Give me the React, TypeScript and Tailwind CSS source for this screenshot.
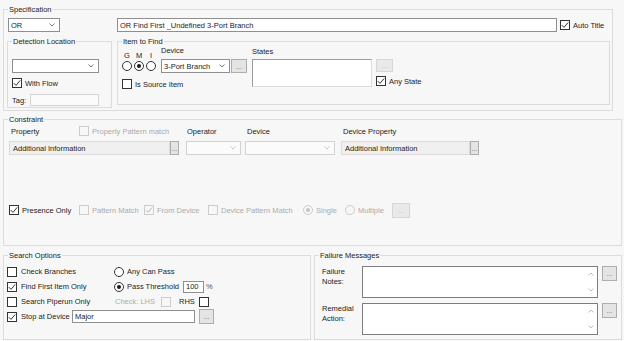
import type { ReactNode } from "react";

// WinForms style "find item" dialog

function Group({ title, className, children }: { title: string; className: string; children: ReactNode }) {
  return (
    <fieldset className={`shrink-0 border border-[#dcdcdc] ${className}`}>
      <legend className="ml-[4px] px-[1px] leading-[9px]">{title}</legend>
      {children}
    </fieldset>
  );
}

function Check({ checked, disabled, className = "" }: { checked?: boolean; disabled?: boolean; className?: string }) {
  return (
    <span
      className={`flex h-[10px] w-[10px] shrink-0 items-center justify-center border ${
        disabled ? "border-[#cccccc] bg-[#f7f7f7]" : "border-[#333333] bg-white"
      } ${className}`}
    >
      {checked && (
        <svg width="8" height="8" viewBox="0 0 8 8">
          <path d="M0.8 4.2 L3 6.4 L7.2 1.4" fill="none" stroke={disabled ? "#b8b8b8" : "#333"} strokeWidth="1" />
        </svg>
      )}
    </span>
  );
}

function Radio({ checked, disabled, className = "" }: { checked?: boolean; disabled?: boolean; className?: string }) {
  return (
    <span
      className={`flex h-[10px] w-[10px] shrink-0 items-center justify-center rounded-full border ${
        disabled ? "border-[#cccccc] bg-[#f7f7f7]" : "border-[#333333] bg-white"
      } ${className}`}
    >
      {checked && <span className={`h-[4px] w-[4px] rounded-full ${disabled ? "bg-[#c4c4c4]" : "bg-[#1a1a1a]"}`} />}
    </span>
  );
}

function Chevron({ up, color = "#666" }: { up?: boolean; color?: string }) {
  return (
    <svg width="6" height="4" viewBox="0 0 6 4" className="shrink-0">
      <path d={up ? "M0.5 3.5 L3 1 L5.5 3.5" : "M0.5 0.5 L3 3 L5.5 0.5"} fill="none" stroke={color} strokeWidth="0.9" />
    </svg>
  );
}

function Combo({ value = "", disabled, className }: { value?: string; disabled?: boolean; className: string }) {
  return (
    <div
      className={`flex shrink-0 items-center justify-between border pl-[2px] pr-[4px] ${
        disabled ? "border-[#d2d2d2] bg-[#fbfbfb]" : "border-[#8f8f8f] bg-white"
      } ${className}`}
    >
      <span className="whitespace-nowrap">{value}</span>
      <Chevron color={disabled ? "#c2c2c2" : "#6a6a6a"} />
    </div>
  );
}

function Dots({ disabled, className }: { disabled?: boolean; className: string }) {
  return (
    <div
      className={`flex shrink-0 items-center justify-center border text-[7px] leading-none ${
        disabled ? "border-[#d6d6d6] bg-[#e9e9e9] text-[#bdbdbd]" : "border-[#adadad] bg-[#e4e4e4] text-[#6a6a6a]"
      } ${className}`}
    >
      ...
    </div>
  );
}

function Memo({ className }: { className: string }) {
  return (
    <div className={`flex shrink-0 justify-end border border-[#7d7d7d] bg-white ${className}`}>
      <div className="flex w-[12px] flex-col items-center justify-between py-[5px]">
        <Chevron up color="#b5b5b5" />
        <Chevron color="#b5b5b5" />
      </div>
    </div>
  );
}

export default function App() {
  const dim = "text-[#ababab]";

  return (
    <div className="h-[341px] w-[624px] overflow-hidden bg-[#f7f7f7] pl-[3px] pt-[5px] font-['Liberation_Sans',Arial,sans-serif] text-[7.5px] leading-[9px] text-[#1c1c1c] antialiased">
      {/* Specification */}
      <Group title="Specification" className="h-[106px] w-[610px]">
        <div className="pl-[3px] pt-[4px]">
          <div className="flex h-[14px] items-center">
            <Combo value="OR" className="ml-[1px] h-[14px] w-[52px]" />
            <div className="ml-[57px] flex h-[14px] w-[440px] shrink-0 items-center border border-[#8f8f8f] bg-white pl-[2px]">
              OR Find First _Undefined 3-Port Branch
            </div>
            <Check checked className="ml-[3px]" />
            <span className="ml-[3px] whitespace-nowrap">Auto Title</span>
          </div>

          <div className="mt-[5px] flex">
            <Group title="Detection Location" className="h-[71px] w-[105px]">
              <div className="pl-[4px] pt-[13px]">
                <Combo className="h-[14px] w-[87px]" />
                <div className="mt-[5px] flex h-[10px] items-center">
                  <Check checked />
                  <span className="ml-[3px]">With Flow</span>
                </div>
                <div className="mt-[6px] flex h-[12px] items-center">
                  <span className="w-[18px]">Tag:</span>
                  <div className="h-[12px] w-[69px] border border-[#d4d4d4] bg-[#fbfbfb]" />
                </div>
              </div>
            </Group>

            <Group title="Item to Find" className="ml-[5px] h-[68px] w-[493px]">
              <div className="flex pl-[3px]">
                <div className="flex flex-col">
                  <div className="flex items-start">
                    <div className="mt-[5px] flex">
                      {[
                        ["G", false],
                        ["M", true],
                        ["I", false],
                      ].map(([l, on]) => (
                        <div key={l as string} className="flex w-[12px] flex-col items-center">
                          <span className="leading-[9px]">{l}</span>
                          <Radio checked={on as boolean} className="mt-[1px]" />
                        </div>
                      ))}
                    </div>
                    <div className="ml-[4px]">
                      <div className="leading-[9px]">Device</div>
                      <div className="mt-[4px] flex">
                        <Combo value="3-Port Branch" className="h-[14px] w-[69px]" />
                        <Dots className="ml-[1px] h-[14px] w-[16px]" />
                      </div>
                    </div>
                  </div>
                  <div className="mt-[6px] flex h-[10px] items-center pl-[1px]">
                    <Check />
                    <span className="ml-[3px]">Is Source Item</span>
                  </div>
                </div>

                <div className="ml-[5px]">
                  <div className="mt-[1px]">States</div>
                  <div className="mt-[3px] h-[28px] w-[120px] border border-[#9c9c9c] border-b-[#dcdcdc] border-r-[#dcdcdc] bg-white" />
                </div>

                <div className="ml-[4px]">
                  <Dots disabled className="mt-[13px] h-[13px] w-[17px]" />
                  <div className="mt-[4px] flex h-[10px] items-center">
                    <Check checked />
                    <span className="ml-[3px] whitespace-nowrap">Any State</span>
                  </div>
                </div>
              </div>
            </Group>
          </div>
        </div>
      </Group>

      {/* Constraint */}
      <Group title="Constraint" className="mt-[4px] h-[131px] w-[619px]">
        <div className="mt-[2px] flex h-[10px] items-center whitespace-nowrap">
          <span className="ml-[7px] w-[68px]">Property</span>
          <div className="flex w-[108px] items-center">
            <Check disabled />
            <span className={`ml-[3px] ${dim}`}>Property Pattern match</span>
          </div>
          <span className="w-[60px]">Operator</span>
          <span className="w-[96px]">Device</span>
          <span>Device Property</span>
        </div>

        <div className="mt-[5px] flex h-[14px] pl-[5px]">
          <div className="flex h-[14px] w-[161px] items-center border border-[#dadada] bg-[#f0f0f0] pl-[3px]">
            Additional Information
          </div>
          <Dots className="h-[14px] w-[9px]" />
          <Combo disabled className="ml-[7px] h-[14px] w-[55px]" />
          <Combo disabled className="ml-[4px] h-[14px] w-[90px]" />
          <div className="ml-[6px] flex h-[14px] w-[129px] items-center border border-[#dadada] bg-[#f0f0f0] pl-[3px]">
            Additional Information
          </div>
          <Dots className="h-[14px] w-[9px]" />
        </div>

        <div className="mt-[47px] flex h-[16px] items-center whitespace-nowrap pl-[5px]">
          <div className="flex w-[70px] items-center">
            <Check checked />
            <span className="ml-[3px]">Presence Only</span>
          </div>
          <div className="flex w-[65px] items-center">
            <Check disabled />
            <span className={`ml-[3px] ${dim}`}>Pattern Match</span>
          </div>
          <div className="flex w-[64px] items-center">
            <Check checked disabled />
            <span className={`ml-[3px] ${dim}`}>From Device</span>
          </div>
          <div className="flex w-[95px] items-center">
            <Check disabled />
            <span className={`ml-[3px] ${dim}`}>Device Pattern Match</span>
          </div>
          <div className="flex w-[42px] items-center">
            <Radio checked disabled />
            <span className={`ml-[3px] ${dim}`}>Single</span>
          </div>
          <div className="flex w-[47px] items-center">
            <Radio disabled />
            <span className={`ml-[3px] ${dim}`}>Multiple</span>
          </div>
          <Dots disabled className="h-[15px] w-[18px]" />
        </div>
      </Group>

      <div className="mt-[5px] flex">
        {/* Search Options */}
        <Group title="Search Options" className="h-[89px] w-[308px]">
          <div className="whitespace-nowrap pl-[3px] pt-[4px]">
            <div className="flex h-[15px] items-center">
              <div className="flex w-[107px] items-center">
                <Check />
                <span className="ml-[4px]">Check Branches</span>
              </div>
              <Radio />
              <span className="ml-[3px]">Any Can Pass</span>
            </div>
            <div className="flex h-[15px] items-center">
              <div className="flex w-[107px] items-center">
                <Check checked />
                <span className="ml-[4px]">Find First Item Only</span>
              </div>
              <div className="flex w-[69px] items-center">
                <Radio checked />
                <span className="ml-[3px]">Pass Threshold</span>
              </div>
              <div className="flex h-[12px] w-[21px] items-center border border-[#8f8f8f] bg-white pl-[2px]">100</div>
              <span className="ml-[2px] text-[#555]">%</span>
            </div>
            <div className="flex h-[15px] items-center">
              <div className="flex w-[107px] items-center">
                <Check />
                <span className="ml-[4px]">Search Piperun Only</span>
              </div>
              <span className={`w-[47px] pl-[1px] ${dim}`}>Check: LHS</span>
              <Check disabled />
              <span className="ml-[8px] w-[20px]">RHS</span>
              <Check />
            </div>
            <div className="flex h-[15px] items-center">
              <div className="flex w-[65px] items-center">
                <Check checked />
                <span className="ml-[4px]">Stop at Device</span>
              </div>
              <div className="flex h-[13px] w-[123px] items-center border border-[#8f8f8f] bg-white pl-[2px]">Major</div>
              <Dots className="ml-[4px] h-[15px] w-[15px]" />
            </div>
          </div>
        </Group>

        {/* Failure Messages */}
        <Group title="Failure Messages" className="ml-[3px] h-[89px] w-[308px]">
          <div className="pl-[7px] pt-[6px]">
            <div className="flex items-start">
              <div className="mt-[1px] w-[40px] leading-[10px]">
                Failure
                <br />
                Notes:
              </div>
              <Memo className="h-[32px] w-[236px]" />
              <Dots className="ml-[4px] h-[15px] w-[15px]" />
            </div>
            <div className="mt-[5px] flex items-start">
              <div className="mt-[1px] w-[40px] leading-[10px]">
                Remedial
                <br />
                Action:
              </div>
              <Memo className="h-[32px] w-[236px]" />
              <Dots className="ml-[4px] h-[15px] w-[15px]" />
            </div>
          </div>
        </Group>
      </div>
    </div>
  );
}
